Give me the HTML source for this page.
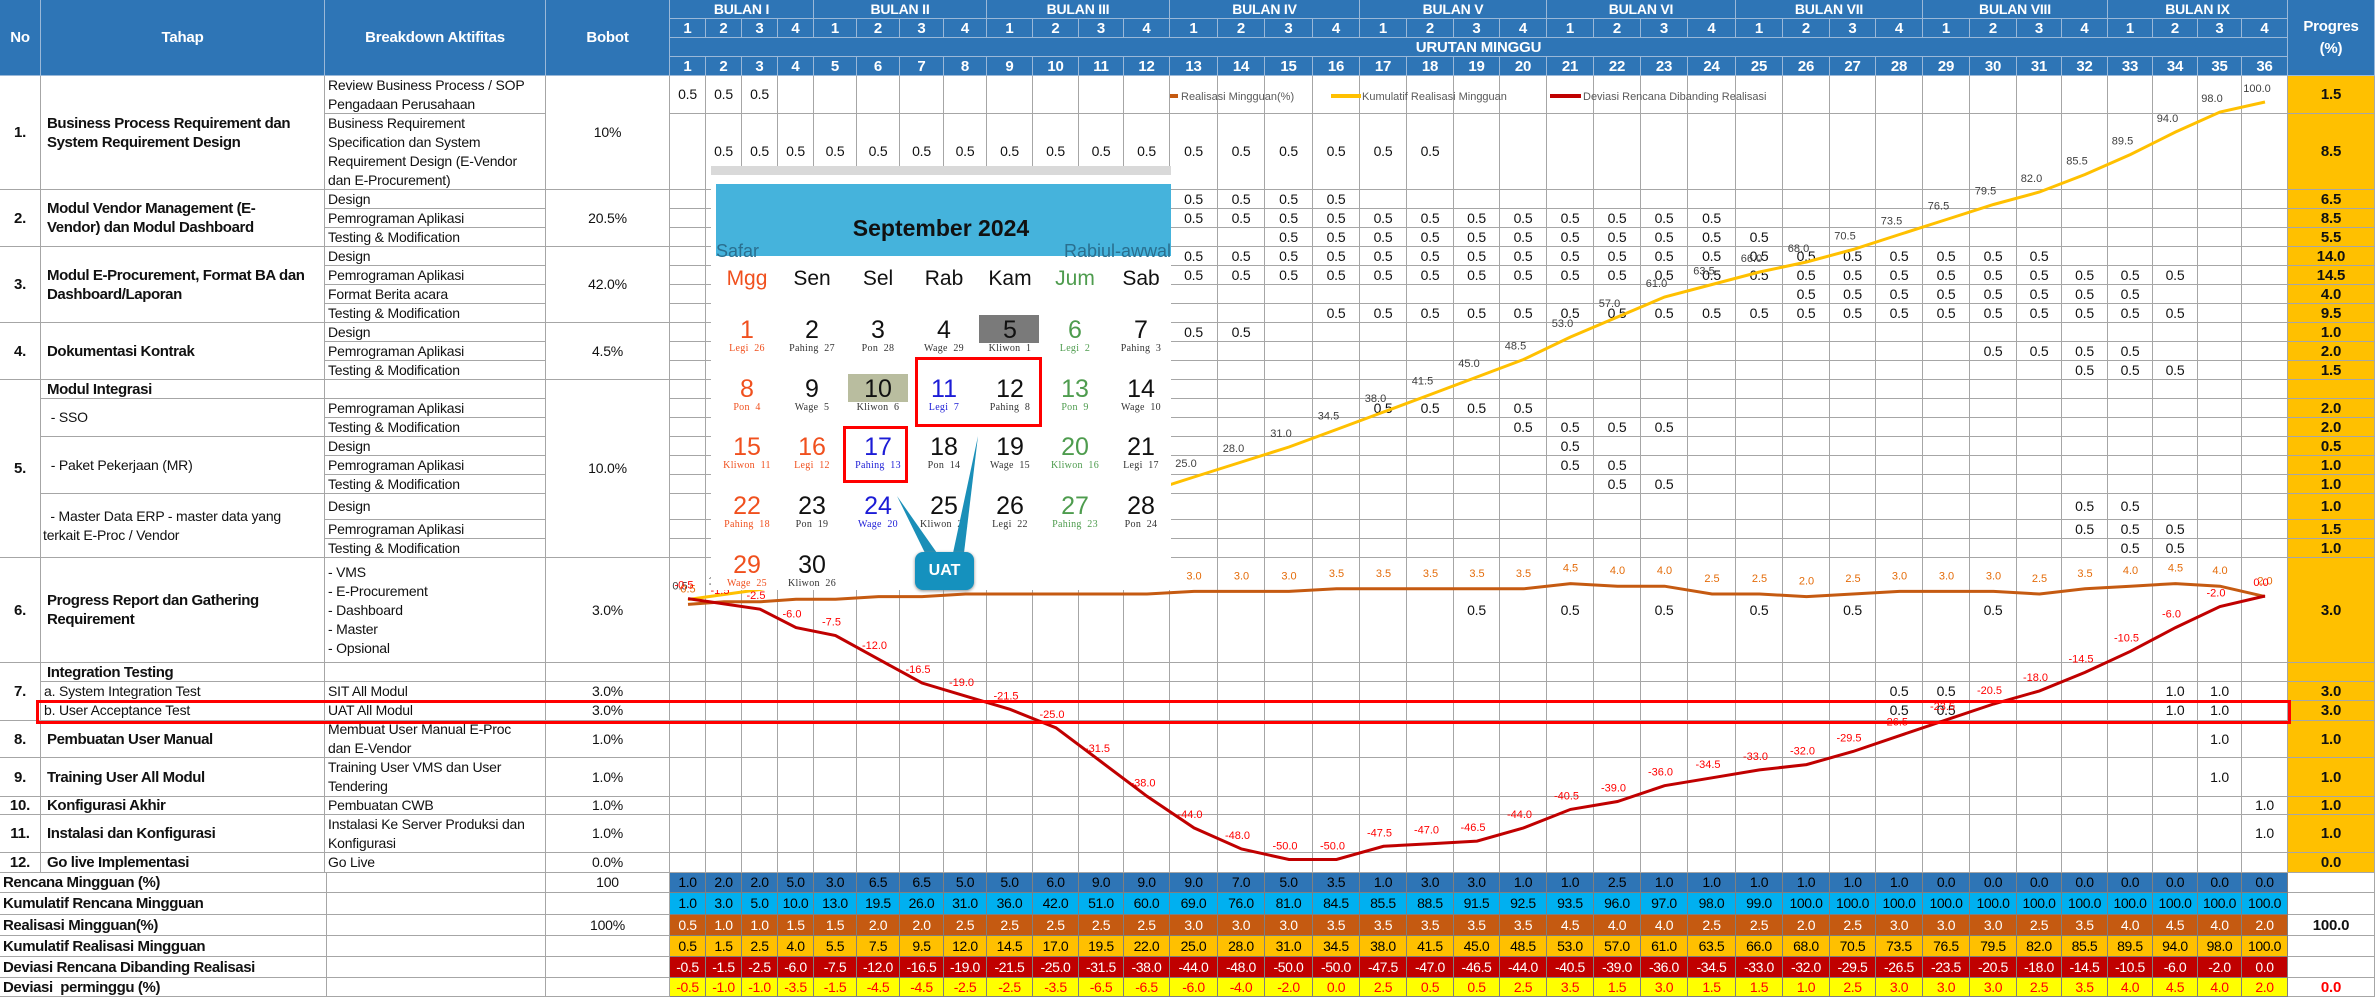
<!DOCTYPE html>
<html><head><meta charset="utf-8">
<style>
*{margin:0;padding:0;box-sizing:border-box}
body{width:2375px;height:997px;overflow:hidden;background:#fff;font-family:"Liberation Sans Narrow","Liberation Sans",sans-serif;}
#w{position:relative;width:2375px;height:997px;overflow:hidden}
.c{position:absolute;border-right:1px solid #a6a6a6;border-bottom:1px solid #a6a6a6;display:flex;align-items:center;font-size:14px;letter-spacing:-0.2px;color:#111;line-height:19px;overflow:hidden;white-space:nowrap}
.h{background:#2e75b6;color:#fff;font-weight:bold;justify-content:center;border-color:#9ab8d8;font-size:15px}
.ctr{justify-content:center}
.b{font-weight:bold}
.lp{padding-left:6px}
.wrap{white-space:normal}
#cal{position:absolute;left:711px;top:166px;width:460px;height:424px;background:#fff;border-top:9px solid #d9d9d9;font-family:"Liberation Sans",sans-serif;letter-spacing:0}
#cal .band{position:absolute;left:5px;top:9px;right:0;height:72px;background:#45b3dc}
.cn{position:absolute;width:64px;text-align:center;font-size:25px;line-height:26px}
.cj{position:absolute;width:64px;text-align:center;font-size:10px;font-family:"Liberation Serif",serif;line-height:11px;letter-spacing:.3px}
.dn{position:absolute;width:64px;text-align:center;font-size:21px}
</style></head><body><div id="w"></div>
<script>
const W=document.getElementById('w');
const X=[0,41,325,546,670,706,742,778,814,857,900,944,987,1033,1079,1124,1170,1218,1265,1313,1360,1407,1454,1500,1547,1594,1641,1688,1736,1783,1830,1876,1923,1970,2017,2062,2108,2153,2198,2242,2288,2375];
function wx0(k){return X[3+k]} function wx1(k){return X[4+k]}
function cell(x0,y0,x1,y1,t,cls,st){const d=document.createElement('div');d.className='c '+(cls||'');d.style.cssText=`left:${x0}px;top:${y0}px;width:${x1-x0}px;height:${y1-y0}px;`+(st||'');d.innerHTML=t||'';W.appendChild(d);return d}
const TB='font-size:15px;letter-spacing:-0.4px';
cell(0,0,41,76,'No','h');cell(41,0,325,76,'Tahap','h');cell(325,0,546,76,'Breakdown Aktifitas','h');cell(546,0,670,76,'Bobot','h');
cell(2288,0,2375,76,'<div style="text-align:center;line-height:22px">Progres<br>(%)</div>','h');
const BL=['I','II','III','IV','V','VI','VII','VIII','IX'];
for(let m=0;m<9;m++){cell(wx0(m*4+1),0,wx1(m*4+4),19,'BULAN '+BL[m],'h','font-size:14px');for(let j=1;j<=4;j++){const k=m*4+j;cell(wx0(k),19,wx1(k),38,j,'h');cell(wx0(k),57,wx1(k),76,k,'h');}}
cell(670,38,2288,57,'URUTAN MINGGU','h');
function R(a,b,v){const o={};for(let i=a;i<=b;i++)o[i]=v||'0.5';return o}
const L=[
[76,114,'Review Business Process / SOP<br>Pengadaan Perusahaan',R(1,3),'1.5'],
[114,190,'Business Requirement<br>Specification dan System<br>Requirement Design (E-Vendor<br>dan E-Procurement)',R(2,18),'8.5'],
[190,209,'Design',R(4,16),'6.5'],[209,228,'Pemrograman Aplikasi',R(8,24),'8.5'],[228,247,'Testing &amp; Modification',R(15,25),'5.5'],
[247,266,'Design',R(4,31),'14.0'],[266,285,'Pemrograman Aplikasi',R(6,34),'14.5'],[285,304,'Format Berita acara',R(26,33),'4.0'],[304,323,'Testing &amp; Modification',R(16,34),'9.5'],
[323,342,'Design',R(13,14),'1.0'],[342,361,'Pemrograman Aplikasi',R(30,33),'2.0'],[361,380,'Testing &amp; Modification',R(32,34),'1.5'],
[380,399,'',{},''],
[399,418,'Pemrograman Aplikasi',R(17,20),'2.0'],[418,437,'Testing &amp; Modification',R(20,23),'2.0'],
[437,456,'Design',R(21,21),'0.5'],[456,475,'Pemrograman Aplikasi',R(21,22),'1.0'],[475,494,'Testing &amp; Modification',R(22,23),'1.0'],
[494,520,'Design',R(32,33),'1.0'],[520,539,'Pemrograman Aplikasi',R(32,34),'1.5'],[539,558,'Testing &amp; Modification',R(33,34),'1.0'],
[558,663,'- VMS<br>- E-Procurement<br>- Dashboard<br>- Master<br>- Opsional',{19:'0.5',21:'0.5',23:'0.5',25:'0.5',27:'0.5',30:'0.5'},'3.0'],
[663,682,'',{},''],
[682,701,'SIT All Modul',{28:'0.5',29:'0.5',34:'1.0',35:'1.0'},'3.0'],
[701,721,'UAT All Modul',{28:'0.5',29:'0.5',34:'1.0',35:'1.0'},'3.0'],
[721,758,'Membuat User Manual E-Proc<br>dan E-Vendor',{35:'1.0'},'1.0'],
[758,797,'Training User VMS dan User<br>Tendering',{35:'1.0'},'1.0'],
[797,815,'Pembuatan CWB',{36:'1.0'},'1.0'],
[815,853,'Instalasi Ke Server Produksi dan<br>Konfigurasi',{36:'1.0'},'1.0'],
[853,873,'Go Live',{},'0.0']];
L.forEach(r=>{cell(325,r[0],546,r[1],'<div>'+r[2]+'</div>','lp','padding-left:3px');
 for(let k=1;k<=36;k++)cell(wx0(k),r[0],wx1(k),r[1],r[3][k]||'','ctr');
 cell(2288,r[0],2375,r[1],r[4],'ctr b','background:#ffc000;font-size:15px');});
const S=[[76,190,'1.','Business Process Requirement dan<br>System Requirement Design','10%'],
[190,247,'2.','Modul Vendor Management (E-<br>Vendor) dan Modul Dashboard','20.5%'],
[247,323,'3.','Modul E-Procurement, Format BA dan<br>Dashboard/Laporan','42.0%'],
[323,380,'4.','Dokumentasi Kontrak','4.5%'],[380,558,'5.',null,'10.0%'],
[558,663,'6.','Progress Report dan Gathering<br>Requirement','3.0%'],[663,721,'7.',null,null],
[721,758,'8.','Pembuatan User Manual','1.0%'],[758,797,'9.','Training User All Modul','1.0%'],
[797,815,'10.','Konfigurasi Akhir','1.0%'],[815,853,'11.','Instalasi dan Konfigurasi','1.0%'],[853,873,'12.','Go live Implementasi','0.0%']];
S.forEach(s=>{cell(0,s[0],41,s[1],s[2],'ctr b','font-size:15px');
 if(s[3])cell(41,s[0],325,s[1],'<div>'+s[3]+'</div>','lp b',TB);
 if(s[4])cell(546,s[0],670,s[1],s[4],'ctr');});
cell(41,380,325,399,'Modul Integrasi','lp b',TB);cell(41,399,325,437,'&nbsp;- SSO','lp');
cell(41,437,325,494,'&nbsp;- Paket Pekerjaan (MR)','lp');cell(41,494,325,558,'<div>&nbsp;&nbsp;- Master Data ERP - master data yang<br>terkait E-Proc / Vendor</div>','',"padding-left:2px");
cell(41,663,325,682,'Integration Testing','lp b',TB);cell(41,682,325,701,'a. System Integration Test','','padding-left:3px');cell(41,701,325,721,'b. User Acceptance Test','','padding-left:3px');
cell(546,663,670,682,'','');cell(546,682,670,701,'3.0%','ctr');cell(546,701,670,721,'3.0%','ctr');
const f=a=>a.map(v=>v.toFixed(1));
const SR=[[873,893,'Rencana Mingguan (%)','100','#2e75b6','#000',f([1,2,2,5,3,6.5,6.5,5,5,6,9,9,9,7,5,3.5,1,3,3,1,1,2.5,1,1,1,1,1,1,0,0,0,0,0,0,0,0]),''],
[893,915,'Kumulatif Rencana Mingguan','','#00b0f0','#000',f([1,3,5,10,13,19.5,26,31,36,42,51,60,69,76,81,84.5,85.5,88.5,91.5,92.5,93.5,96,97,98,99,100,100,100,100,100,100,100,100,100,100,100]),''],
[915,936,'Realisasi Mingguan(%)','100%','#c55a11','#fff',f([.5,1,1,1.5,1.5,2,2,2.5,2.5,2.5,2.5,2.5,3,3,3,3.5,3.5,3.5,3.5,3.5,4.5,4,4,2.5,2.5,2,2.5,3,3,3,2.5,3.5,4,4.5,4,2]),'100.0'],
[936,957,'Kumulatif Realisasi Mingguan','','#ffc000','#000',f([.5,1.5,2.5,4,5.5,7.5,9.5,12,14.5,17,19.5,22,25,28,31,34.5,38,41.5,45,48.5,53,57,61,63.5,66,68,70.5,73.5,76.5,79.5,82,85.5,89.5,94,98,100]),''],
[957,978,'Deviasi Rencana Dibanding Realisasi','','#c00000','#fff',f([-.5,-1.5,-2.5,-6,-7.5,-12,-16.5,-19,-21.5,-25,-31.5,-38,-44,-48,-50,-50,-47.5,-47,-46.5,-44,-40.5,-39,-36,-34.5,-33,-32,-29.5,-26.5,-23.5,-20.5,-18,-14.5,-10.5,-6,-2,0]),''],
[978,997,'Deviasi&nbsp; perminggu (%)','','#ffff00','#f00',f([-.5,-1,-1,-3.5,-1.5,-4.5,-4.5,-2.5,-2.5,-3.5,-6.5,-6.5,-6,-4,-2,0,2.5,.5,.5,2.5,3.5,1.5,3,1.5,1.5,1,2.5,3,3,3,2.5,3.5,4,4.5,4,2]),'<span style="color:#f00">0.0</span>']];
SR.forEach(r=>{cell(0,r[0],327,r[1],r[2],'b','padding-left:3px;'+TB);cell(327,r[0],546,r[1],'');cell(546,r[0],670,r[1],r[3],'ctr');
 for(let k=1;k<=36;k++)cell(wx0(k),r[0],wx1(k),r[1],r[6][k-1],'ctr',`background:${r[4]};color:${r[5]};border-color:#7f7f7f;letter-spacing:-0.4px`);
 cell(2288,r[0],2375,r[1],r[7],'ctr b','font-size:15px');});
const cx=k=>(wx0(k)+wx1(k))/2;
const cum=SR[3][6].map(Number),rea=SR[2][6].map(Number),dev=SR[4][6].map(Number);
let svg='<svg width="2375" height="997" style="position:absolute;left:0;top:0" font-family="Liberation Sans Narrow, Liberation Sans, sans-serif" font-size="11">';
const pts=(a,fn)=>a.map((v,i)=>cx(i+1).toFixed(1)+','+fn(v).toFixed(1)).join(' ');
const yc=v=>602-5*v,yr=v=>607-5.2*v,yd=v=>596-5.27*v;
svg+=`<polyline points="${pts(rea,yr)}" fill="none" stroke="#c55a11" stroke-width="3"/>`;
svg+=`<polyline points="${pts(cum,yc)}" fill="none" stroke="#ffc000" stroke-width="3"/>`;
svg+=`<polyline points="${pts(dev,yd)}" fill="none" stroke="#c00000" stroke-width="3"/>`;
cum.forEach((v,i)=>svg+=`<text x="${cx(i+1)-8}" y="${yc(v)-10}" fill="#404040" text-anchor="middle">${v.toFixed(1)}</text>`);
rea.forEach((v,i)=>svg+=`<text x="${cx(i+1)}" y="${yr(v)-12}" fill="#e46c0a" text-anchor="middle">${v.toFixed(1)}</text>`);
dev.forEach((v,i)=>svg+=`<text x="${cx(i+1)-4}" y="${yd(v)-10}" fill="#f00" text-anchor="middle">${v.toFixed(1)}</text>`);
svg+=`<rect x="1170" y="94" width="8" height="4" fill="#c55a11"/><text x="1181" y="100" fill="#595959">Realisasi Mingguan(%)</text>`;
svg+=`<rect x="1331" y="94" width="30" height="4" fill="#ffc000"/><text x="1362" y="100" fill="#595959">Kumulatif Realisasi Mingguan</text>`;
svg+=`<rect x="1550" y="94" width="31" height="4" fill="#c00000"/><text x="1583" y="100" fill="#595959">Deviasi Rencana Dibanding Realisasi</text>`;
svg+='</svg>';W.insertAdjacentHTML('beforeend',svg);
let c='<div id="cal"><div class="band"></div>';
c+='<div style="position:absolute;left:0;right:0;top:40px;text-align:center;font-size:23px;font-weight:bold;color:#111">September 2024</div>';
c+='<div style="position:absolute;left:5px;top:66px;font-size:18px;color:#2a6f8f">Safar</div><div style="position:absolute;right:0;top:66px;font-size:18px;color:#2a6f8f">Rabiul-awwal</div>';
const CX=[747,812,878,944,1010,1075,1141].map(v=>v-711-32);
const red='#f0501e',grn='#4e9c4e',blu='#1c1cd6';
['Mgg','Sen','Sel','Rab','Kam','Jum','Sab'].forEach((d,i)=>c+=`<div class="dn" style="left:${CX[i]}px;top:92px;color:${i==0?red:i==5?grn:'#111'}">${d}</div>`);
const jw=['Legi','Pahing','Pon','Wage','Kliwon'];
const NY=[330,389,447,506,565];
for(let d=1;d<=30;d++){const col=(d-1)%7,row=Math.floor((d-1)/7);let col2=col==0?red:col==5?grn:'#111';if(d==16)col2=red;if(d==11||d==17||d==24)col2=blu;
 const x=CX[col],y=NY[row]-166-9;
 if(d==5)c+=`<div style="position:absolute;left:${979-711}px;top:${315-166-9}px;width:60px;height:28px;background:#7a7a7a"></div>`;
 if(d==10)c+=`<div style="position:absolute;left:${848-711}px;top:${374-166-9}px;width:60px;height:28px;background:#b9bd9f"></div>`;
 const jl=jw[(d-1)%5],jn=d<=4?d+25:d-4;
 c+=`<div class="cn" style="left:${x}px;top:${y-13}px;color:${col2}">${d}</div><div class="cj" style="left:${x}px;top:${y+13}px;color:${col2=='#111'?'#333':col2}">${jl}&nbsp; ${jn}</div>`;}
c+=`<div style="position:absolute;left:${915-711}px;top:${357-175}px;width:127px;height:70px;border:3px solid #f00"></div>`;
c+=`<div style="position:absolute;left:${843-711}px;top:${426-175}px;width:65px;height:57px;border:3px solid #f00"></div>`;
c+=`<svg style="position:absolute;left:0;top:0" width="460" height="424"><polygon points="${897-711},${496-175} ${925-711},${553-175} ${937-711},${553-175}" fill="#1a8fb8"/><polygon points="${978-711},${436-175} ${953-711},${553-175} ${964-711},${553-175}" fill="#1a8fb8"/></svg>`;
c+=`<div style="position:absolute;left:${915-711}px;top:${552-175}px;width:59px;height:38px;background:#1591be;border-radius:8px;color:#fff;font-weight:bold;font-size:16px;display:flex;align-items:center;justify-content:center;box-shadow:0 1px 3px #888">UAT</div>`;
c+='</div>';W.insertAdjacentHTML('beforeend',c);
W.insertAdjacentHTML('beforeend','<div style="position:absolute;left:36px;top:700px;width:2255px;height:24px;border:3px solid #f00"></div>');
</script></body></html>
